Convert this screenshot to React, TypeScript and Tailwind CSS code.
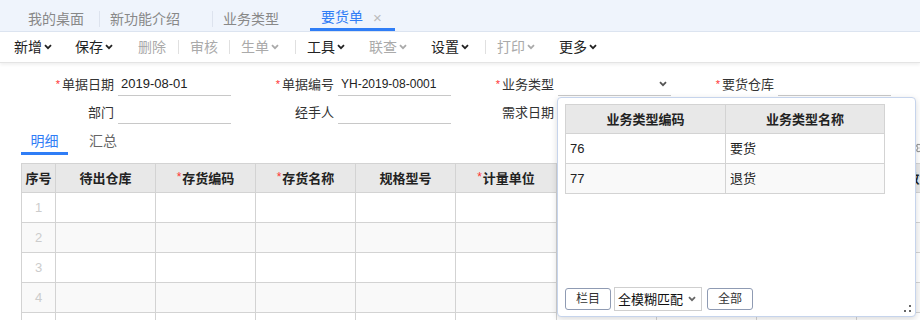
import React from 'react';
import { Settings } from 'lucide-react';

const Chevron = ({ className }: { className?: string }) => (
  <svg width="8" height="6" viewBox="0 0 8 6" className={className}>
    <path d="M1 1.2l3 3 3-3" fill="none" stroke="currentColor" strokeWidth="1.8" />
  </svg>
);

const toolbar = [
  { t: '新增', chev: true, on: true, ml: 'ml-[14px]' },
  { t: '保存', chev: true, on: true, ml: 'ml-[23px]' },
  { t: '删除', chev: false, on: false, ml: 'ml-[25px]' },
  { sep: true, ml: 'ml-[12px]' },
  { t: '审核', chev: false, on: false, ml: 'ml-[11px]' },
  { sep: true, ml: 'ml-[11px]' },
  { t: '生单', chev: true, on: false, ml: 'ml-[11px]' },
  { sep: true, ml: 'ml-[16px]' },
  { t: '工具', chev: true, on: true, ml: 'ml-[11px]' },
  { t: '联查', chev: true, on: false, ml: 'ml-[24px]' },
  { t: '设置', chev: true, on: true, ml: 'ml-[24px]' },
  { sep: true, ml: 'ml-[16px]' },
  { t: '打印', chev: true, on: false, ml: 'ml-[11px]' },
  { t: '更多', chev: true, on: true, ml: 'ml-[24px]' },
];

const columns = [
  { t: '序号', w: 'w-[34px]' },
  { t: '待出仓库', w: 'w-[100px]' },
  { t: '存货编码', w: 'w-[100px]', req: true },
  { t: '存货名称', w: 'w-[100px]', req: true },
  { t: '规格型号', w: 'w-[100px]' },
  { t: '计量单位', w: 'w-[101px]', req: true },
  { t: '数量', w: 'w-[100px]', req: true },
  { t: '单价', w: 'w-[100px]' },
  { t: '金额', w: 'w-[100px]' },
  { t: '需求数量', w: 'w-[100px]' },
];

const Field = ({ label, req, value, select, mono }: { label: string; req?: boolean; value?: string; select?: boolean; mono?: boolean }) => (
  <div className="flex w-[220px]">
    <div className="w-[96px] h-[28px] pt-[4px] flex items-center justify-end text-[13px] text-[#333]">
      {req && <span className="text-[#f33] text-[11px] mr-[2px]">*</span>}
      {label}
    </div>
    <div className="ml-[4px] w-[113px] h-[28px] pt-[4px] pl-[3px] pr-[4px] flex items-center justify-between border-b border-[#c8c8c8] text-[#222]">
      <span className={mono ? 'text-[12px]' : 'text-[13px]'}>{value}</span>
      {select && <Chevron className="text-[#555]" />}
    </div>
  </div>
);

export default function App() {
  return (
    <div className="w-[920px] h-[320px] overflow-hidden relative bg-white font-['Liberation_Sans','Noto_Sans_CJK_SC',sans-serif] leading-none">
      {/* tab bar */}
      <div className="h-[32px] bg-[#eff4fc] border-b border-[#dce4f0] flex text-[14px] text-[#888]">
        <div className="ml-[18px] w-[81px] pl-[10px] pt-[6px] flex items-center">我的桌面</div>
        <div className="w-[113px] pt-[6px] flex items-center">
          <span className="w-px h-[16px] bg-[#dde3ee] mr-[10px]" />新功能介绍
        </div>
        <div className="w-[98px] pt-[6px] flex items-center">
          <span className="w-px h-[16px] bg-[#dde3ee] mr-[10px]" />业务类型
        </div>
        <div className="w-[85px] pt-[6px] pl-[11px] flex items-center border-b-[3px] border-[#2f7df6] text-[#2f7df6]">
          要货单<span className="ml-[10px] text-[#bbb] text-[15px]">×</span>
        </div>
      </div>

      {/* toolbar */}
      <div className="h-[31px] flex items-center border-b border-[#e4e4e4] shadow-[0_2px_3px_rgba(0,0,0,0.06)] text-[14px]">
        {toolbar.map((b, i) =>
          b.sep ? (
            <span key={i} className={`${b.ml} w-px h-[14px] bg-[#e0e0e0]`} />
          ) : (
            <div key={i} className={`${b.ml} flex items-center gap-[2px] ${b.on ? 'text-[#222]' : 'text-[#aaa]'}`}>
              {b.t}
              {b.chev && <Chevron />}
            </div>
          )
        )}
      </div>

      {/* form + grid */}
      <div className="w-[940px]">
        <div className="mt-[5px] ml-[18px] flex">
          <Field label="单据日期" req value="2019-08-01" />
          <Field label="单据编号" req value="YH-2019-08-0001" mono />
          <Field label="业务类型" req select />
          <Field label="要货仓库" req />
        </div>
        <div className="ml-[18px] flex">
          <Field label="部门" />
          <Field label="经手人" />
          <Field label="需求日期" />
        </div>

        <div className="flex items-start h-[31px]">
          <div className="ml-[21px] w-[47px] h-[31px] pt-[6px] flex items-center justify-center border-b-[3px] border-[#2f7df6] text-[14px] text-[#2f7df6]">
            明细
          </div>
          <div className="ml-[21px] h-[28px] pt-[6px] flex items-center text-[14px] text-[#666]">汇总</div>
          <Settings size={14} className="ml-auto mr-[11px] mt-[17px] text-[#999]" />
        </div>

        <div className="mt-[8px] ml-[21px] border-l border-t border-[#d3d3d3] inline-block">
          <div className="flex h-[29px] bg-[#e8e8e8]">
            {columns.map((c) => (
              <div key={c.t} className={`${c.w} h-[29px] border-r border-b border-[#d3d3d3] flex items-center justify-center text-[13px] font-bold text-[#222]`}>
                {c.req && <span className="text-[#f33] font-normal text-[12px] mr-[1px] -mt-[3px]">*</span>}
                {c.t}
              </div>
            ))}
          </div>
          {[1, 2, 3, 4, 5].map((n) => (
            <div key={n} className={`flex h-[30px] ${n % 2 === 0 ? 'bg-[#f9f9f9]' : 'bg-white'}`}>
              {columns.map((c, i) => (
                <div key={c.t} className={`${c.w} h-[30px] border-r border-b border-[#d3d3d3] flex items-center justify-center text-[13px] text-[#ccc]`}>
                  {i === 0 && n < 5 ? n : ''}
                </div>
              ))}
            </div>
          ))}
        </div>
      </div>

      {/* dropdown popup */}
      <div className="absolute left-[557px] top-[97px] w-[359px] h-[220px] bg-white border border-[#c6d4ec] rounded-[4px] shadow-[0_2px_6px_rgba(0,0,0,0.15)] flex flex-col pl-[7px] pt-[6px]">
        <div className="w-[320px] border-l border-t border-[#d3d3d3]">
          <div className="flex h-[29px] bg-[#e8e8e8] text-[13px] font-bold text-[#222]">
            <div className="w-[160px] border-r border-b border-[#d3d3d3] flex items-center justify-center">业务类型编码</div>
            <div className="w-[159px] border-r border-b border-[#d3d3d3] flex items-center justify-center">业务类型名称</div>
          </div>
          {[
            ['76', '要货'],
            ['77', '退货'],
          ].map(([code, name], i) => (
            <div key={code} className={`flex h-[30px] text-[13px] text-[#222] ${i % 2 === 1 ? 'bg-[#f9f9f9]' : 'bg-white'}`}>
              <div className="w-[160px] border-r border-b border-[#d3d3d3] flex items-center pl-[4px]">{code}</div>
              <div className="w-[159px] border-r border-b border-[#d3d3d3] flex items-center pl-[4px]">{name}</div>
            </div>
          ))}
        </div>
        <div className="mt-auto mb-[5px] flex items-center">
          <button className="w-[46px] h-[22px] border border-[#8f9bb3] rounded-[3px] bg-white text-[12px] text-[#333] flex items-center justify-center">
            栏目
          </button>
          <div className="ml-[3px] w-[88px] h-[24px] border border-[#cfcfcf] bg-white flex items-center justify-between pl-[3px] pr-[5px] text-[13px] text-[#111]">
            全模糊匹配
            <Chevron className="text-[#666]" />
          </div>
          <button className="ml-[5px] w-[46px] h-[22px] border border-[#8f9bb3] rounded-[3px] bg-white text-[12px] text-[#333] flex items-center justify-center">
            全部
          </button>
        </div>
        <svg width="7" height="7" viewBox="0 0 7 7" className="absolute right-[4px] bottom-[4px]">
          <rect x="5" y="0" width="2" height="2" fill="#666" />
          <rect x="0" y="5" width="2" height="2" fill="#666" />
          <rect x="5" y="5" width="2" height="2" fill="#666" />
        </svg>
      </div>
    </div>
  );
}
